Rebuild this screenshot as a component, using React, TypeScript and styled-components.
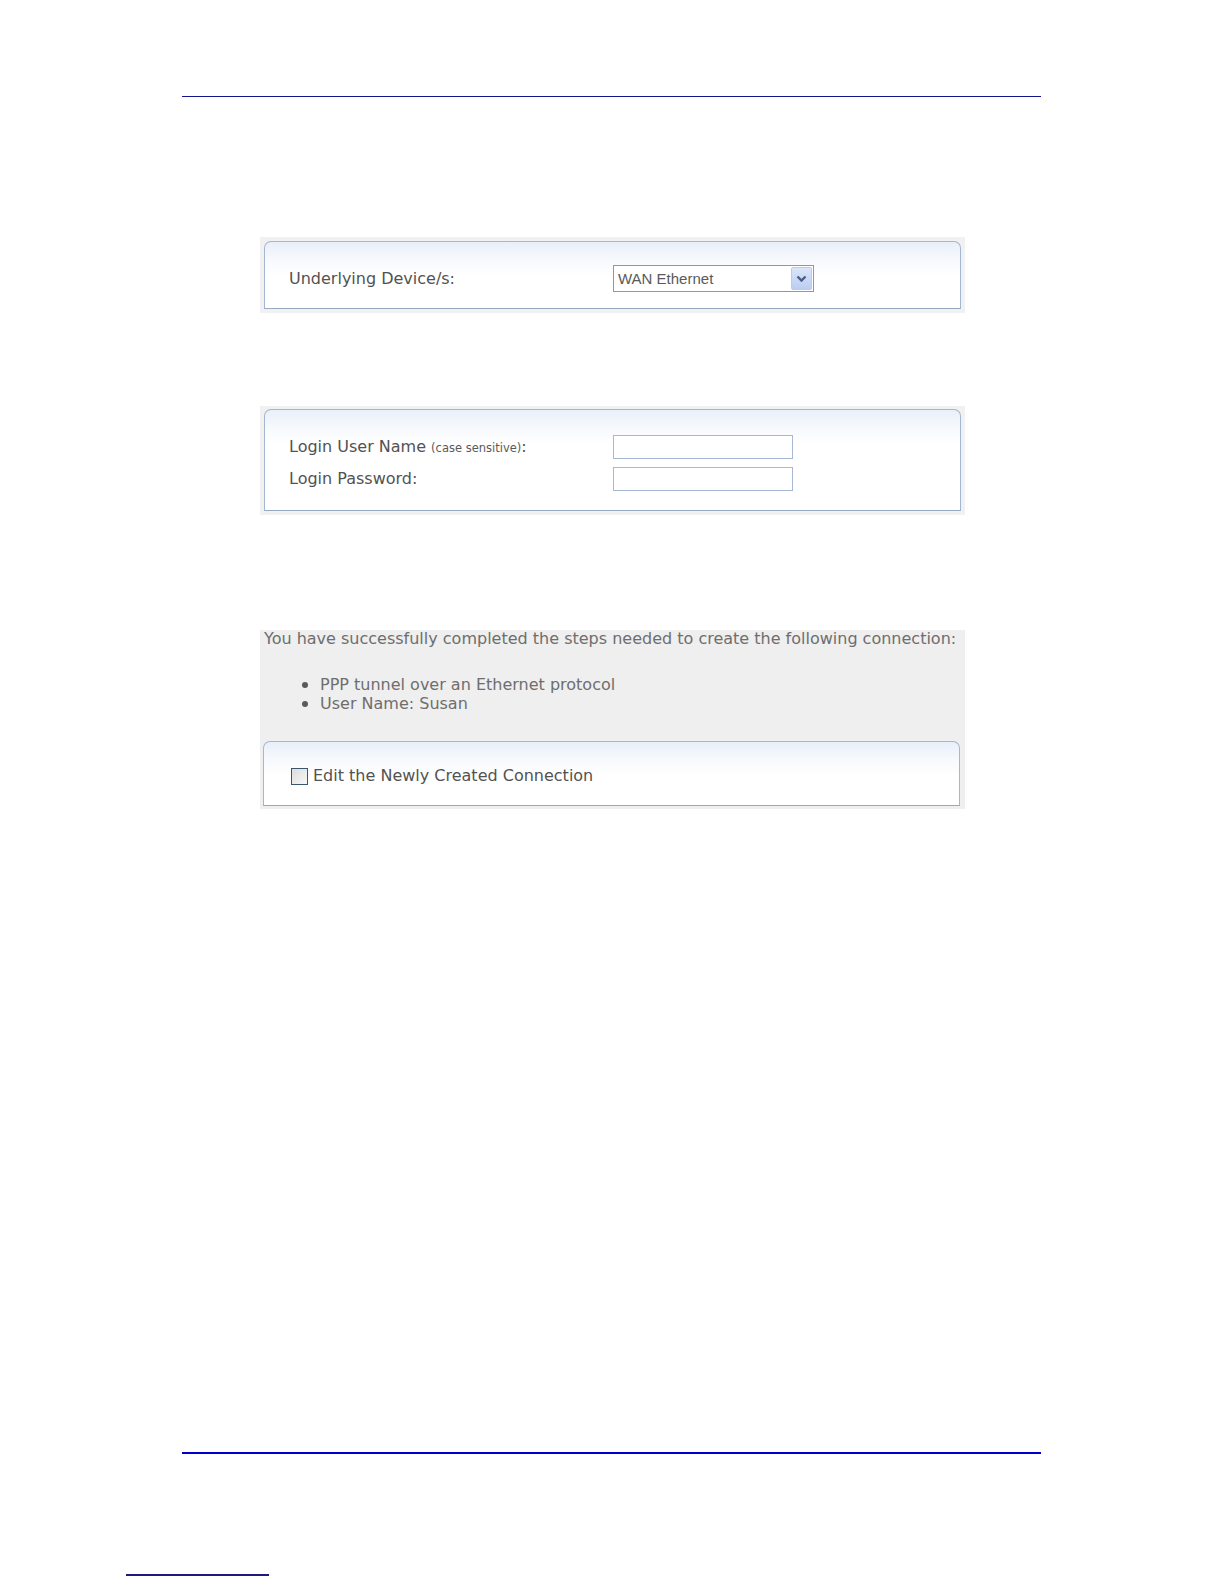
import React from "react";
import styled, { createGlobalStyle } from "styled-components";

const GlobalStyle = createGlobalStyle`
  html, body { margin: 0; padding: 0; background: #ffffff; }
  body { font-family: "DejaVu Sans", Verdana, sans-serif; }
`;

const Page = styled.div`
  width: 1224px;
  min-height: 1584px;
  box-sizing: border-box;
  padding-top: 96px;
  display: flex;
  flex-direction: column;
`;

const Rule = styled.div<{ $color: string; $thick: number; $left: number; $width: number; $top: number }>`
  margin-top: ${(p) => p.$top}px;
  margin-left: ${(p) => p.$left}px;
  width: ${(p) => p.$width}px;
  height: ${(p) => p.$thick}px;
  background: ${(p) => p.$color};
  flex: none;
`;

const Block = styled.div<{ $top: number }>`
  margin-top: ${(p) => p.$top}px;
  margin-left: 260px;
  width: 705px;
  flex: none;
`;

const Halo = styled.div<{ $pad: string }>`
  background: #f1f1f1;
  padding: ${(p) => p.$pad};
`;

const Box = styled.div<{ $pad: string }>`
  border: 1px solid #a4b6d0;
  border-bottom-color: #95a8c4;
  border-radius: 7px 7px 0 0;
  background: linear-gradient(to bottom, #e9eff9 0px, #f7f9fd 18px, #ffffff 34px);
  padding: ${(p) => p.$pad};
  display: flex;
  flex-direction: column;
  gap: 8px;
`;

const FieldRow = styled.div`
  display: grid;
  grid-template-columns: 324px auto;
  align-items: center;
`;

const Label = styled.span`
  font-family: "DejaVu Sans", Verdana, sans-serif;
  font-size: 16px;
  line-height: 18px;
  color: #525252;
  white-space: nowrap;
`;

const Small = styled.span`
  font-size: 11.5px;
  color: #5a5a5a;
`;

const SelectBox = styled.div`
  width: 201px;
  height: 27px;
  box-sizing: border-box;
  border: 1px solid #7f9db9;
  background: #fff;
  display: flex;
  align-items: center;
  justify-content: space-between;
  padding: 0 1px 0 4px;
`;

const SelectText = styled.span`
  font-family: "Liberation Sans", Arial, sans-serif;
  font-size: 15px;
  color: #5a5a5a;
`;

const DropButton = styled.div`
  width: 21px;
  height: 23px;
  box-sizing: border-box;
  border: 1px solid #b9cbef;
  border-radius: 2px;
  background: linear-gradient(to bottom, #dbe5fa, #bccdf2);
  display: flex;
  align-items: center;
  justify-content: center;
`;

const TextInput = styled.div`
  width: 180px;
  height: 24px;
  box-sizing: border-box;
  border: 1px solid #a6b8d6;
  background: #fff;
`;

const Summary = styled.div`
  background: #efefef;
  padding: 0 5px 3px 3px;
`;

const Intro = styled.div`
  font-family: "DejaVu Sans", Verdana, sans-serif;
  font-size: 16px;
  line-height: 17px;
  color: #6e6e6e;
  margin-left: 1px;
  white-space: nowrap;
`;

const List = styled.ul`
  margin: 28px 0 0 0;
  padding: 0 0 0 39px;
  list-style: none;
  font-family: "DejaVu Sans", Verdana, sans-serif;
  font-size: 16px;
  line-height: 19px;
  color: #6e6e6e;
`;

const Item = styled.li`
  display: flex;
  align-items: center;
  gap: 12px;
  &::before {
    content: "";
    width: 6px;
    height: 6px;
    border-radius: 50%;
    background: #5a5a5a;
    flex: none;
  }
`;

const CheckRow = styled.label`
  display: flex;
  align-items: center;
  gap: 5px;
`;

const CheckSquare = styled.span`
  width: 17px;
  height: 17px;
  box-sizing: border-box;
  border: 1px solid #3c5670;
  background: linear-gradient(135deg, #dcdcdc, #f7f7f7);
  flex: none;
`;

const Spacer = styled.div`
  height: 28px;
`;

const Chevron = () => (
  <svg width="11" height="8" viewBox="0 0 11 8">
    <path d="M1.5 1.5 L5.5 5.5 L9.5 1.5" fill="none" stroke="#4a5d86" strokeWidth="2.4" />
  </svg>
);

export default function App() {
  return (
    <>
      <GlobalStyle />
      <Page>
        <Rule $color="#14148f" $thick={1} $left={182} $width={859} $top={0} />

        <Block $top={140}>
          <Halo $pad="4px 4px 4px 4px">
            <Box $pad="23px 24px 16px 24px">
              <FieldRow>
                <Label>Underlying Device/s:</Label>
                <SelectBox>
                  <SelectText>WAN Ethernet</SelectText>
                  <DropButton>
                    <Chevron />
                  </DropButton>
                </SelectBox>
              </FieldRow>
            </Box>
          </Halo>
        </Block>

        <Block $top={93}>
          <Halo $pad="3px 4px 4px 4px">
            <Box $pad="25px 24px 19px 24px">
              <FieldRow>
                <Label>
                  Login User Name <Small>(case sensitive)</Small>:
                </Label>
                <TextInput />
              </FieldRow>
              <FieldRow>
                <Label>Login Password:</Label>
                <TextInput />
              </FieldRow>
            </Box>
          </Halo>
        </Block>

        <Block $top={115}>
          <Summary>
            <Intro>You have successfully completed the steps needed to create the following connection:</Intro>
            <List>
              <Item>PPP tunnel over an Ethernet protocol</Item>
              <Item>User Name: Susan</Item>
            </List>
            <Spacer />
            <Box $pad="25px 24px 20px 27px">
              <CheckRow>
                <CheckSquare />
                <Label>Edit the Newly Created Connection</Label>
              </CheckRow>
            </Box>
          </Summary>
        </Block>

        <Rule $color="#0000cc" $thick={2} $left={182} $width={859} $top={643} />
        <Rule $color="#1a1a80" $thick={2} $left={126} $width={143} $top={120} />
      </Page>
    </>
  );
}
